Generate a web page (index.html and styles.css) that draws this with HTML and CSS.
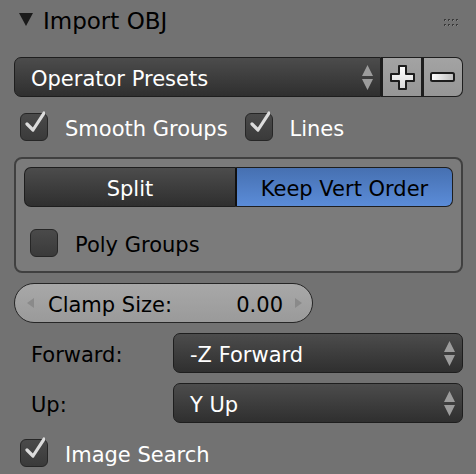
FILE: index.html
```html
<!DOCTYPE html>
<html>
<head>
<meta charset="utf-8">
<link rel="stylesheet" href="styles.css">
</head>
<body>
<div class="panel">
  <div class="header">
    <svg class="tri" width="14" height="13" viewBox="0 0 14 13"><path d="M0 0 H14 L7 13 Z" fill="#1a1a1a"/></svg>
    <span class="title">Import OBJ</span>
    <svg class="grip" width="16" height="8" viewBox="0 0 16 8">
      <g fill="#3a3a3a">
        <rect x="0" y="0" width="2" height="2"/><rect x="4" y="0" width="2" height="2"/><rect x="8" y="0" width="2" height="2"/><rect x="12" y="0" width="2" height="2"/>
        <rect x="0" y="5" width="2" height="2"/><rect x="4" y="5" width="2" height="2"/><rect x="8" y="5" width="2" height="2"/><rect x="12" y="5" width="2" height="2"/>
      </g>
      <g fill="#8a8a8a">
        <rect x="1" y="1" width="1" height="1"/><rect x="5" y="1" width="1" height="1"/><rect x="9" y="1" width="1" height="1"/><rect x="13" y="1" width="1" height="1"/>
        <rect x="1" y="6" width="1" height="1"/><rect x="5" y="6" width="1" height="1"/><rect x="9" y="6" width="1" height="1"/><rect x="13" y="6" width="1" height="1"/>
      </g>
    </svg>
  </div>

  <div class="presets">
    <div class="menu presets-menu">
      <span class="menu-text">Operator Presets</span>
      <svg class="updown" width="11" height="25" viewBox="0 0 11 25"><path d="M5.5 0 L11 11 H0 Z M0 14 H11 L5.5 25 Z" fill="#9c9c9c"/></svg>
    </div>
    <div class="tool plus">
      <svg width="25" height="25" viewBox="0 0 25 25"><defs><linearGradient id="gw" x1="0" y1="0" x2="0" y2="1"><stop offset="0" stop-color="#ffffff"/><stop offset="1" stop-color="#d8d8d8"/></linearGradient></defs><path d="M9 1 H16 V9 H24 V16 H16 V24 H9 V16 H1 V9 H9 Z" fill="url(#gw)" stroke="#1c1c1c" stroke-width="2" stroke-linejoin="round"/></svg>
    </div>
    <div class="tool minus">
      <svg width="25" height="10" viewBox="0 0 25 10"><defs><linearGradient id="gm" x1="0" y1="0" x2="1" y2="0"><stop offset="0" stop-color="#ffffff"/><stop offset="1" stop-color="#bdbdbd"/></linearGradient></defs><rect x="1" y="1" width="23" height="8" rx="1.5" fill="url(#gm)" stroke="#1c1c1c" stroke-width="2"/></svg>
    </div>
  </div>

  <div class="row2">
    <label class="check on"><span class="cb"><svg width="24" height="26" viewBox="0 0 24 26"><path d="M6 14 L12 20 L23 3" fill="none" stroke="#dcdcdc" stroke-width="3.2" stroke-linecap="round" stroke-linejoin="round"/></svg></span><span class="lbl">Smooth Groups</span></label>
    <label class="check on"><span class="cb"><svg width="24" height="26" viewBox="0 0 24 26"><path d="M6 14 L12 20 L23 3" fill="none" stroke="#dcdcdc" stroke-width="3.2" stroke-linecap="round" stroke-linejoin="round"/></svg></span><span class="lbl">Lines</span></label>
  </div>

  <div class="box">
    <div class="seg">
      <div class="segbtn split"><span class="t">Split</span></div>
      <div class="segbtn keep"><span class="t">Keep Vert Order</span></div>
    </div>
    <label class="check off poly"><span class="cb"></span><span class="lbl">Poly Groups</span></label>
  </div>

  <div class="slider-row">
    <div class="slider">
      <svg class="arr" width="7" height="10" viewBox="0 0 7 10"><path d="M7 0 V10 L0 5 Z" fill="#8a8a8a"/></svg>
      <span class="s-label">Clamp Size:</span>
      <span class="s-val">0.00</span>
      <svg class="arr" width="7" height="10" viewBox="0 0 7 10"><path d="M0 0 V10 L7 5 Z" fill="#8a8a8a"/></svg>
    </div>
  </div>

  <div class="prop">
    <span class="prop-label">Forward:</span>
    <div class="menu prop-menu">
      <span class="menu-text">-Z Forward</span>
      <svg class="updown" width="11" height="25" viewBox="0 0 11 25"><path d="M5.5 0 L11 11 H0 Z M0 14 H11 L5.5 25 Z" fill="#9c9c9c"/></svg>
    </div>
  </div>
  <div class="prop">
    <span class="prop-label">Up:</span>
    <div class="menu prop-menu">
      <span class="menu-text">Y Up</span>
      <svg class="updown" width="11" height="25" viewBox="0 0 11 25"><path d="M5.5 0 L11 11 H0 Z M0 14 H11 L5.5 25 Z" fill="#9c9c9c"/></svg>
    </div>
  </div>

  <label class="check on last"><span class="cb"><svg width="24" height="26" viewBox="0 0 24 26"><path d="M6 14 L12 20 L23 3" fill="none" stroke="#dcdcdc" stroke-width="3.2" stroke-linecap="round" stroke-linejoin="round"/></svg></span><span class="lbl">Image Search</span></label>
</div>
</body>
</html>
```

FILE: styles.css
```css
html, body {
  margin: 0;
  padding: 0;
}
body {
  width: 476px;
  height: 474px;
  overflow: hidden;
  background: #727272;
  font-family: "DejaVu Sans", sans-serif;
  font-size: 21px;
  color: #000;
}
.panel {
  padding: 0 13px 0 14px;
  display: flex;
  flex-direction: column;
}
.header {
  height: 57px;
  display: flex;
  align-items: flex-start;
  padding-top: 9px;
  box-sizing: border-box;
  line-height: 24px;
}
.tri {
  margin: 4px 0 0 5px;
  flex: none;
}
.title {
  margin-left: 10px;
  flex: 1;
  font-size: 23px;
}
.grip {
  margin: 10px 3px 0 0;
}

.presets {
  display: flex;
  height: 40px;
}
.menu {
  display: flex;
  align-items: center;
  box-sizing: border-box;
  height: 40px;
  border: 1.5px solid #1e1e1e;
  background: linear-gradient(#4c4c4c, #2f2f2f);
  color: #fff;
  border-radius: 7px;
  padding: 0 7px 0 16px;
}
.menu-text {
  flex: 1;
  white-space: nowrap;
  padding-top: 3px;
}
.presets-menu {
  width: 368px;
  border-radius: 7px 0 0 7px;
}
.tool {
  box-sizing: border-box;
  height: 40px;
  width: 41px;
  border: 1.5px solid #1e1e1e;
  border-left: 2px solid #1e1e1e;
  background: linear-gradient(#a3a3a3, #969696);
  display: flex;
  align-items: center;
  justify-content: center;
}
.minus {
  border-radius: 0 7px 7px 0;
  padding-right: 2px;
}

.row2 {
  display: grid;
  grid-template-columns: 1fr 1fr;
  margin-top: 16px;
}
.check {
  display: flex;
  align-items: center;
  height: 28px;
  padding-left: 6px;
  line-height: 28px;
}
.cb {
  box-sizing: border-box;
  width: 28px;
  height: 28px;
  border: 1.5px solid #262626;
  border-radius: 6px;
  background: linear-gradient(#4a4a4a, #3a3a3a);
  flex: none;
  position: relative;
}
.cb svg {
  position: absolute;
  left: 0;
  top: -4px;
}
.lbl {
  margin-left: 17px;
  padding-top: 3px;
  white-space: nowrap;
}
.check.on .lbl {
  color: #fff;
}

.box {
  margin-top: 16px;
  height: 116px;
  box-sizing: border-box;
  border: 2px solid #404040;
  border-radius: 8px;
  background: #7b7b7b;
  padding: 8px 8px 0 8px;
}
.seg {
  display: flex;
  height: 40px;
}
.segbtn {
  box-sizing: border-box;
  height: 40px;
  display: flex;
  align-items: center;
  justify-content: center;
  border: 1.5px solid #1e1e1e;
  white-space: nowrap;
}
.segbtn .t {
  padding-top: 3px;
}
.split {
  width: 213px;
  background: linear-gradient(#4c4c4c, #2f2f2f);
  color: #fff;
  border-radius: 7px 0 0 7px;
  border-right: 2px solid #111;
}
.keep {
  flex: 1;
  border-left: none;
  background: linear-gradient(#4670b1, #5b8cd8);
  border-radius: 0 7px 7px 0;
  color: #000;
}
.poly {
  margin-top: 22px;
}

.slider-row {
  margin-top: 10px;
  display: flex;
}
.slider {
  width: 299px;
  height: 40px;
  box-sizing: border-box;
  border: 1.5px solid #262626;
  border-radius: 20px;
  background: linear-gradient(#a8a8a8, #9a9a9a);
  display: flex;
  align-items: center;
  padding: 0 10px 0 12px;
}
.s-label {
  margin-left: 14px;
  flex: 1;
  padding-top: 3px;
}
.s-val {
  margin-right: 12px;
  padding-top: 3px;
}

.prop {
  display: flex;
  align-items: center;
  margin-top: 10px;
  height: 40px;
}
.prop-label {
  width: 159px;
  padding-left: 17px;
  padding-top: 3px;
  box-sizing: border-box;
  flex: none;
}
.prop-menu {
  flex: 1;
}
.last {
  margin-top: 16px;
}
```
